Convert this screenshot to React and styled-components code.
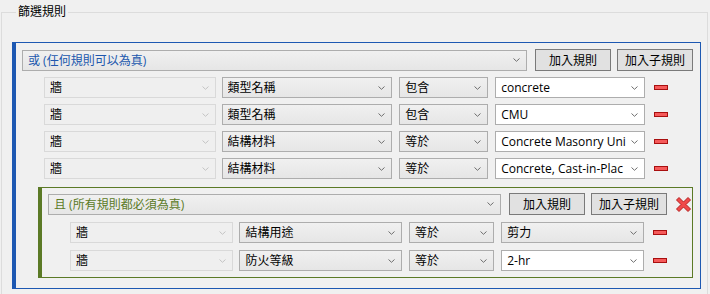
import React from 'react';
import styled, { createGlobalStyle } from 'styled-components';

const Global = createGlobalStyle`
  html, body {
    margin: 0;
    background: #f0f0f0;
    font-family: "Open Sans", "Noto Sans CJK TC", sans-serif;
    font-size: 12px;
    color: #000;
  }
`;

const Page = styled.div`
  padding: 4px 0 0 1px;
  width: 707px;
  height: 300px;
  overflow: hidden;
`;

const Fieldset = styled.fieldset`
  margin: 0;
  padding: 22px 6px 20px 10px;
  border: 1px solid #dcdcdc;
  height: 320px;
  box-sizing: border-box;
`;

const Legend = styled.legend`
  padding: 0 2px;
  margin-left: 4px;
  line-height: 16px;
  font-size: 12px;
`;

const Group = styled.div`
  display: flex;
  flex-direction: column;
  gap: ${p => (p.$nested ? '7px' : '6px')};
  border: 1px solid ${p => p.$color};
  border-left-width: 4px;
  padding: ${p => (p.$nested ? '5px 0 6px 6px' : '6px 7px 10px 6px')};
  margin: ${p => (p.$nested ? '2px 0 0 16px' : '0')};
`;

const Header = styled.div`
  display: flex;
  align-items: center;
  gap: 6px;
`;

const Combo = styled.div`
  display: flex;
  align-items: center;
  height: 21px;
  box-sizing: border-box;
  min-width: 0;
  flex: ${p => p.$grow} 1 0;
  padding: 0 6px 0 5px;
  border: 1px solid ${p => (p.$disabled ? '#d9d9d9' : '#adadad')};
  background: ${p =>
    p.$white ? '#fff' : p.$disabled ? '#efefef' : 'linear-gradient(#f0f0f0, #e6e6e6)'};
  color: ${p => p.$color || '#000'};
  margin-right: ${p => p.$gapRight || 0}px;
`;

const ComboText = styled.span`
  flex: 1;
  overflow: hidden;
  white-space: nowrap;
  line-height: 19px;
`;

const Button = styled.button`
  height: 22px;
  width: 76px;
  padding: 0;
  border: 1px solid #7a7a7a;
  background: #e1e1e1;
  font-family: inherit;
  font-size: 12px;
  color: #000;
`;

const Row = styled.div`
  display: flex;
  align-items: center;
  gap: 6px;
  margin-left: 22px;
  margin-right: 25px;
`;

const Minus = styled.span`
  width: 14px;
  height: 5px;
  box-sizing: border-box;
  border: 1px solid #a80f0f;
  background: #f55a5a;
  margin-left: 3px;
  flex: none;
`;

const Chevron = ({ light }) => (
  <svg width="7" height="4" viewBox="0 0 7 4" style={{ flex: 'none' }}>
    <path d="M0.5 0.5 L3.5 3.3 L6.5 0.5" fill="none" stroke={light ? '#c4c4c4' : '#6e6e6e'} strokeWidth="1" />
  </svg>
);

const CloseIcon = () => (
  <svg width="17" height="17" viewBox="0 0 17 17" style={{ flex: 'none', marginLeft: 2 }}>
    <polygon
      points="1.5,4 4,1.5 8.5,6 13,1.5 15.5,4 11,8.5 15.5,13 13,15.5 8.5,11 4,15.5 1.5,13 6,8.5"
      fill="#f04a4a"
      stroke="#b51f1f"
      strokeWidth="1"
      strokeLinejoin="round"
    />
  </svg>
);

const Select = ({ children, grow, disabled, white, color, gapRight }) => (
  <Combo $grow={grow} $disabled={disabled} $white={white} $color={color} $gapRight={gapRight}>
    <ComboText>{children}</ComboText>
    <Chevron light={disabled} />
  </Combo>
);

const Rule = ({ field, op, value, white }) => (
  <Row>
    <Select grow={175} disabled>牆</Select>
    <Select grow={174} gapRight={1}>{field}</Select>
    <Select grow={84} gapRight={1}>{op}</Select>
    <Select grow={151} white={white}>{value}</Select>
    <Minus />
  </Row>
);

const BLUE = '#1d58b2';
const GREEN = '#5b7a26';

export default function App() {
  return (
    <Page>
      <Global />
      <Fieldset>
        <Legend>篩選規則</Legend>
        <Group $color={BLUE}>
          <Header>
            <Select grow={1} color="#2057ad" gapRight={2}>或 (任何規則可以為真)</Select>
            <Button>加入規則</Button>
            <Button>加入子規則</Button>
          </Header>
          <Rule field="類型名稱" op="包含" value="concrete" white />
          <Rule field="類型名稱" op="包含" value="CMU" white />
          <Rule field="結構材料" op="等於" value="Concrete Masonry Uni" white />
          <Rule field="結構材料" op="等於" value="Concrete, Cast-in-Plac" white />
          <Group $color={GREEN} $nested>
            <Header>
              <Select grow={1} color={GREEN} gapRight={2}>且 (所有規則都必須為真)</Select>
              <Button>加入規則</Button>
              <Button>加入子規則</Button>
              <CloseIcon />
            </Header>
            <Rule field="結構用途" op="等於" value="剪力" />
            <Rule field="防火等級" op="等於" value="2-hr" white />
          </Group>
        </Group>
      </Fieldset>
    </Page>
  );
}
